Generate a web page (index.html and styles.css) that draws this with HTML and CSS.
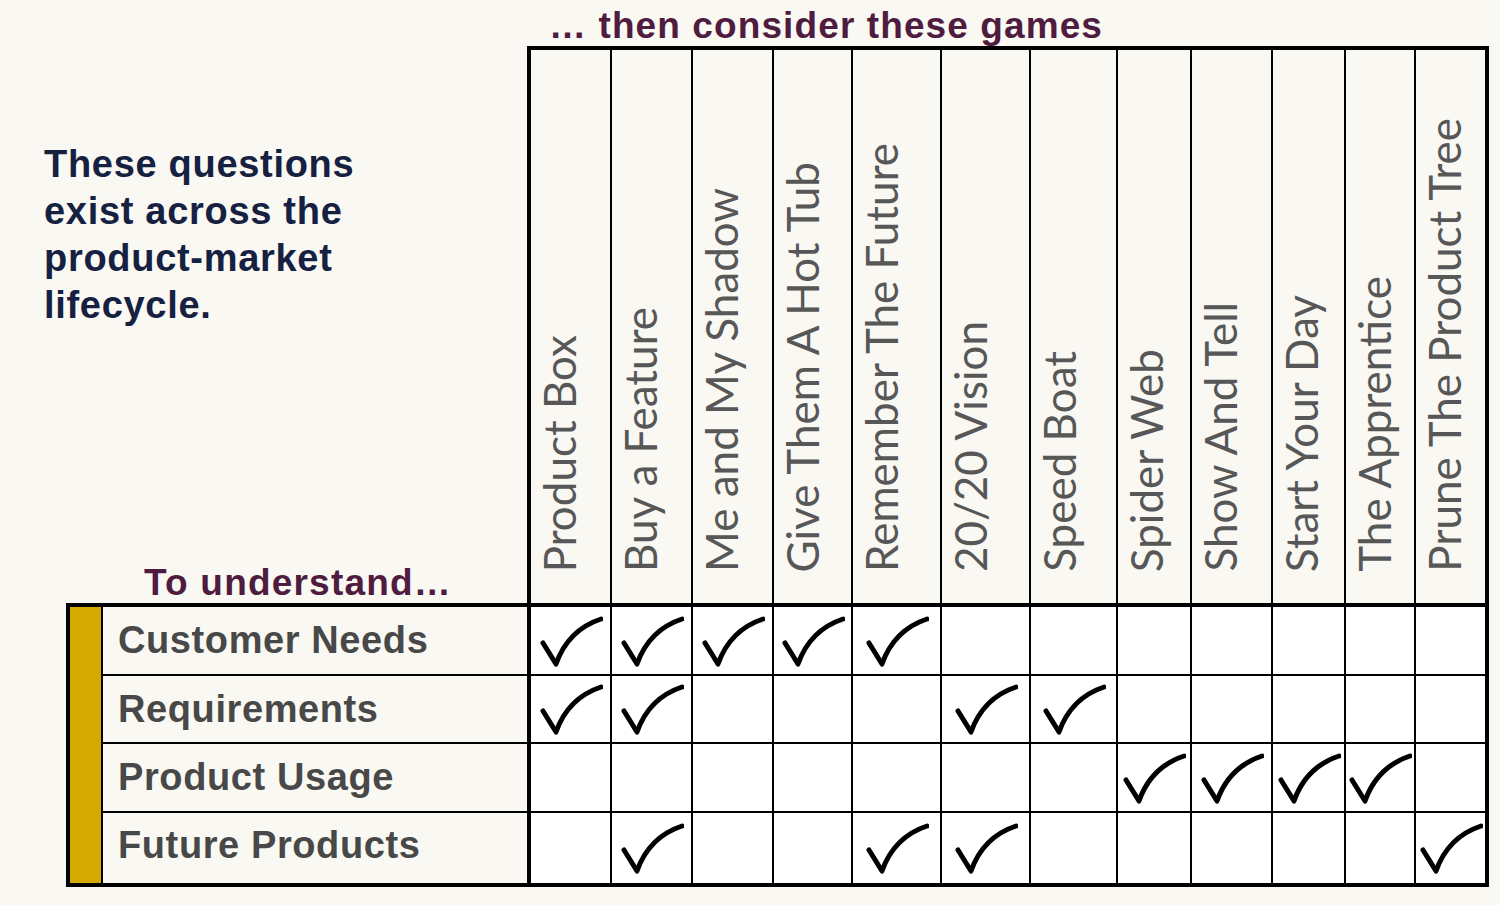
FILE: index.html
```html
<!DOCTYPE html>
<html lang="en">
<head>
<meta charset="utf-8">
<title>Innovation Games matrix</title>
<link rel="stylesheet" href="styles.css">
</head>
<body>
<div class="top">
  <div class="intro">
    <p class="lead">These questions<br>exist across the<br>product-market<br>lifecycle.</p>
    <p class="understand">To understand…</p>
  </div>
  <div class="games">
    <h2 class="title">… then consider these games</h2>
    <div class="head-grid">
      <div class="gh"><span>Product Box</span></div>
      <div class="gh"><span>Buy a Feature</span></div>
      <div class="gh"><span>Me and My Shadow</span></div>
      <div class="gh"><span>Give Them A Hot Tub</span></div>
      <div class="gh"><span>Remember The Future</span></div>
      <div class="gh"><span>20/20 Vision</span></div>
      <div class="gh"><span>Speed Boat</span></div>
      <div class="gh"><span>Spider Web</span></div>
      <div class="gh"><span>Show And Tell</span></div>
      <div class="gh"><span>Start Your Day</span></div>
      <div class="gh"><span>The Apprentice</span></div>
      <div class="gh"><span>Prune The Product Tree</span></div>
    </div>
  </div>
</div>

<div class="matrix">
  <div class="gold"></div>

  <div class="label">Customer Needs</div>
  <div class="cell"><svg class="tick" viewBox="0 0 64 52"><path d="M4 28 L17 49 Q29 15 62 4"/></svg></div>
  <div class="cell"><svg class="tick" viewBox="0 0 64 52"><path d="M4 28 L17 49 Q29 15 62 4"/></svg></div>
  <div class="cell"><svg class="tick" viewBox="0 0 64 52"><path d="M4 28 L17 49 Q29 15 62 4"/></svg></div>
  <div class="cell"><svg class="tick" viewBox="0 0 64 52"><path d="M4 28 L17 49 Q29 15 62 4"/></svg></div>
  <div class="cell"><svg class="tick" viewBox="0 0 64 52"><path d="M4 28 L17 49 Q29 15 62 4"/></svg></div>
  <div class="cell"></div>
  <div class="cell"></div>
  <div class="cell"></div>
  <div class="cell"></div>
  <div class="cell"></div>
  <div class="cell"></div>
  <div class="cell"></div>

  <div class="label">Requirements</div>
  <div class="cell"><svg class="tick" viewBox="0 0 64 52"><path d="M4 28 L17 49 Q29 15 62 4"/></svg></div>
  <div class="cell"><svg class="tick" viewBox="0 0 64 52"><path d="M4 28 L17 49 Q29 15 62 4"/></svg></div>
  <div class="cell"></div>
  <div class="cell"></div>
  <div class="cell"></div>
  <div class="cell"><svg class="tick" viewBox="0 0 64 52"><path d="M4 28 L17 49 Q29 15 62 4"/></svg></div>
  <div class="cell"><svg class="tick" viewBox="0 0 64 52"><path d="M4 28 L17 49 Q29 15 62 4"/></svg></div>
  <div class="cell"></div>
  <div class="cell"></div>
  <div class="cell"></div>
  <div class="cell"></div>
  <div class="cell"></div>

  <div class="label">Product Usage</div>
  <div class="cell"></div>
  <div class="cell"></div>
  <div class="cell"></div>
  <div class="cell"></div>
  <div class="cell"></div>
  <div class="cell"></div>
  <div class="cell"></div>
  <div class="cell"><svg class="tick" viewBox="0 0 64 52"><path d="M4 28 L17 49 Q29 15 62 4"/></svg></div>
  <div class="cell"><svg class="tick" viewBox="0 0 64 52"><path d="M4 28 L17 49 Q29 15 62 4"/></svg></div>
  <div class="cell"><svg class="tick" viewBox="0 0 64 52"><path d="M4 28 L17 49 Q29 15 62 4"/></svg></div>
  <div class="cell"><svg class="tick" viewBox="0 0 64 52"><path d="M4 28 L17 49 Q29 15 62 4"/></svg></div>
  <div class="cell"></div>

  <div class="label label-last">Future Products</div>
  <div class="cell"></div>
  <div class="cell"><svg class="tick" viewBox="0 0 64 52"><path d="M4 28 L17 49 Q29 15 62 4"/></svg></div>
  <div class="cell"></div>
  <div class="cell"></div>
  <div class="cell"><svg class="tick" viewBox="0 0 64 52"><path d="M4 28 L17 49 Q29 15 62 4"/></svg></div>
  <div class="cell"><svg class="tick" viewBox="0 0 64 52"><path d="M4 28 L17 49 Q29 15 62 4"/></svg></div>
  <div class="cell"></div>
  <div class="cell"></div>
  <div class="cell"></div>
  <div class="cell"></div>
  <div class="cell"></div>
  <div class="cell"><svg class="tick" viewBox="0 0 64 52"><path d="M4 28 L17 49 Q29 15 62 4"/></svg></div>
</div>
</body>
</html>
```
FILE: styles.css
```css
html, body {
  margin: 0;
  background: #f9f8f3;
  font-family: "Liberation Sans", Arial, sans-serif;
}

.top {
  display: flex;
  height: 603px;
}

.intro {
  width: 527px;
  display: flex;
  flex-direction: column;
}

.lead {
  margin: 0;
  padding: 141px 0 0 44px;
  font-size: 38px;
  line-height: 47px;
  font-weight: 700;
  letter-spacing: 0.7px;
  color: #162040;
}

.understand {
  margin: auto 0 0;
  padding-left: 144px;
  font-size: 37px;
  line-height: 40px;
  font-weight: 700;
  letter-spacing: 1.2px;
  color: #4f1c3f;
}

.games {
  display: flex;
  flex-direction: column;
}

.title {
  margin: 0;
  height: 46px;
  box-sizing: border-box;
  padding: 6px 0 0 22px;
  font-size: 37px;
  line-height: 40px;
  font-weight: 700;
  letter-spacing: 1.1px;
  white-space: nowrap;
  color: #4f1c3f;
}

.head-grid,
.matrix {
  display: grid;
  background: #000;
  column-gap: 2px;
}

.head-grid {
  height: 557px;
  box-sizing: border-box;
  padding: 4px 4px 0;
  grid-template-columns: 79px 79px 79px 77px 87px 87px 85px 72px 79px 71px 68px 69px;
}

.gh {
  background: #f9f8f3;
  display: flex;
  flex-direction: column;
  justify-content: flex-end;
  align-items: flex-start;
  padding: 0 0 31px 2px;
  overflow: hidden;
}

.gh span {
  writing-mode: vertical-rl;
  transform: rotate(180deg);
  font-family: Lato, "Open Sans", sans-serif;
  font-size: 44px;
  line-height: 1.2;
  white-space: nowrap;
  color: #575757;
}

.matrix {
  width: max-content;
  margin-left: 66px;
  padding: 4px;
  row-gap: 2px;
  grid-template-columns: 31px 426px 79px 79px 79px 77px 87px 87px 85px 72px 79px 71px 68px 69px;
  grid-template-rows: 67px 66px 67px 70px;
}

.gold {
  grid-column: 1;
  grid-row: 1 / 5;
  background: #d5aa00;
}

.label {
  display: flex;
  align-items: center;
  padding-left: 15px;
  border-right: 2px solid #000;
  background: #f9f8f3;
  font-size: 38px;
  font-weight: 700;
  letter-spacing: 0.6px;
  color: #484848;
  white-space: nowrap;
}

.label-last {
  padding-bottom: 5px;
}

.cell {
  background: #fff;
  display: flex;
  align-items: center;
  justify-content: center;
}

.tick {
  width: 64px;
  height: 52px;
}

.tick path {
  fill: none;
  stroke: #000;
  stroke-width: 5;
  stroke-linecap: round;
  stroke-linejoin: round;
}
```
